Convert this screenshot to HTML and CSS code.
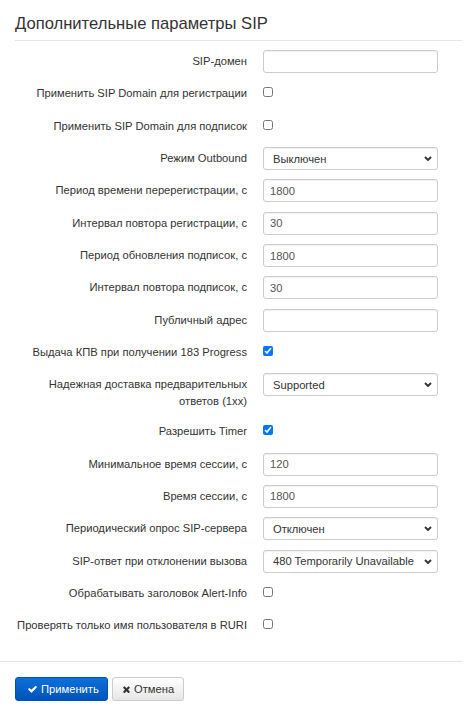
FILE: index.html
```html
<!DOCTYPE html>
<html lang="ru">
<head>
<meta charset="utf-8">
<title>Дополнительные параметры SIP</title>
<link rel="stylesheet" href="styles.css">
</head>
<body>
<div class="panel">
  <div class="header"><h2 class="title">Дополнительные параметры SIP</h2></div>
  <form class="form">
    <div class="row"><label class="lbl">SIP-домен</label><div class="ctl"><input class="inp" type="text" value=""></div></div>
    <div class="row"><label class="lbl">Применить SIP Domain для регистрации</label><div class="ctl chk"><input type="checkbox" class="cb"></div></div>
    <div class="row"><label class="lbl">Применить SIP Domain для подписок</label><div class="ctl chk"><input type="checkbox" class="cb"></div></div>
    <div class="row"><label class="lbl">Режим Outbound</label><div class="ctl sel"><select class="inp select"><option>Выключен</option></select><svg class="chev" viewBox="0 0 8 5" width="8" height="5"><path d="M1 1l3 3 3-3" fill="none" stroke="#333" stroke-width="1.9"/></svg></div></div>
    <div class="row"><label class="lbl">Период времени перерегистрации, с</label><div class="ctl"><input class="inp" type="text" value="1800"></div></div>
    <div class="row"><label class="lbl">Интервал повтора регистрации, с</label><div class="ctl"><input class="inp" type="text" value="30"></div></div>
    <div class="row"><label class="lbl">Период обновления подписок, с</label><div class="ctl"><input class="inp" type="text" value="1800"></div></div>
    <div class="row"><label class="lbl">Интервал повтора подписок, с</label><div class="ctl"><input class="inp" type="text" value="30"></div></div>
    <div class="row"><label class="lbl">Публичный адрес</label><div class="ctl"><input class="inp" type="text" value=""></div></div>
    <div class="row"><label class="lbl">Выдача КПВ при получении 183 Progress</label><div class="ctl chk"><input type="checkbox" class="cb" checked></div></div>
    <div class="row"><label class="lbl lbl-2">Надежная доставка предварительных ответов (1xx)</label><div class="ctl sel"><select class="inp select"><option>Supported</option></select><svg class="chev" viewBox="0 0 8 5" width="8" height="5"><path d="M1 1l3 3 3-3" fill="none" stroke="#333" stroke-width="1.9"/></svg></div></div>
    <div class="row"><label class="lbl">Разрешить Timer</label><div class="ctl chk"><input type="checkbox" class="cb" checked></div></div>
    <div class="row"><label class="lbl">Минимальное время сессии, с</label><div class="ctl"><input class="inp" type="text" value="120"></div></div>
    <div class="row"><label class="lbl">Время сессии, с</label><div class="ctl"><input class="inp" type="text" value="1800"></div></div>
    <div class="row"><label class="lbl">Периодический опрос SIP-сервера</label><div class="ctl sel"><select class="inp select"><option>Отключен</option></select><svg class="chev" viewBox="0 0 8 5" width="8" height="5"><path d="M1 1l3 3 3-3" fill="none" stroke="#333" stroke-width="1.9"/></svg></div></div>
    <div class="row"><label class="lbl">SIP-ответ при отклонении вызова</label><div class="ctl sel"><select class="inp select"><option>480 Temporarily Unavailable</option></select><svg class="chev" viewBox="0 0 8 5" width="8" height="5"><path d="M1 1l3 3 3-3" fill="none" stroke="#333" stroke-width="1.9"/></svg></div></div>
    <div class="row"><label class="lbl">Обрабатывать заголовок Alert-Info</label><div class="ctl chk"><input type="checkbox" class="cb"></div></div>
    <div class="row"><label class="lbl">Проверять только имя пользователя в RURI</label><div class="ctl chk"><input type="checkbox" class="cb"></div></div>
  </form>
  <div class="footer">
    <button class="btn btn-primary" type="button"><svg class="ico" viewBox="110 420 1572 1085" width="9" height="7"><path fill="#fff" d="M1671 566q0 40-28 68l-724 724-136 136q-28 28-68 28t-68-28l-136-136-362-362q-28-28-28-68t28-68l136-136q28-28 68-28t68 28l294 295 656-657q28-28 68-28t68 28l136 136q28 28 28 68z"/></svg>Применить</button>
    <button class="btn btn-default" type="button"><svg class="ico" viewBox="100 300 1210 1240" width="7" height="7"><path fill="#333" d="M1298 1322q0 40-28 68l-136 136q-28 28-68 28t-68-28l-294-294-294 294q-28 28-68 28t-68-28l-136-136q-28-28-28-68t28-68l294-294-294-294q-28-28-28-68t28-68l136-136q28-28 68-28t68 28l294 294 294-294q28-28 68-28t68 28l136 136q28 28 28 68t-28 68l-294 294 294 294q28 28 28 68z"/></svg>Отмена</button>
  </div>
</div>
</body>
</html>
```
FILE: styles.css
```css
html, body {
  margin: 0;
  padding: 0;
  background: #fff;
}
body {
  font-family: "Liberation Sans", Arial, sans-serif;
  color: #333;
  font-size: 11px;
}
.panel {
  width: 462px;
}
.header {
  margin-left: 15px;
  border-bottom: 1px solid #e5e5e5;
  height: 41px;
  box-sizing: border-box;
}
.title {
  margin: 0;
  padding-top: 14px;
  font-size: 16.6px;
  line-height: 20px;
  font-weight: normal;
  color: #333;
}
.form {
  display: flex;
  flex-direction: column;
  gap: 9.35px;
  padding: 9px 0 24px 0;
  margin: 0;
}
.row {
  display: grid;
  grid-template-columns: 232px 175px;
  column-gap: 16px;
  padding-left: 15px;
  align-items: start;
  min-height: 23px;
}
.lbl {
  text-align: right;
  padding-top: 3px;
  line-height: 17px;
  font-size: 11.2px;
  color: #333;
}
.lbl-2 {
  padding-bottom: 0.5px;
}
.ctl {
  height: 23px;
}
.chk {
  display: flex;
  align-items: center;
}
.cb {
  width: 10px;
  height: 10px;
  margin: -3px 0 0 0;
}
.inp {
  box-sizing: border-box;
  width: 175px;
  height: 23px;
  margin: 0;
  border: 1px solid #ccc;
  border-radius: 3px;
  padding: 0 6px;
  font-family: "Liberation Sans", Arial, sans-serif;
  font-size: 11.2px;
  color: #555;
  background: #fff;
  box-shadow: inset 0 1px 1px rgba(0,0,0,0.05);
  outline: none;
}
.sel {
  position: relative;
}
.select {
  appearance: none;
  -webkit-appearance: none;
  padding-left: 9px;
  padding-right: 18px;
  color: #333;
}
.chev {
  position: absolute;
  right: 6px;
  top: 9px;
  pointer-events: none;
}
.footer {
  border-top: 1px solid #e5e5e5;
  padding: 15px 0 0 15px;
  display: flex;
  gap: 4px;
}
.btn {
  display: inline-flex;
  align-items: center;
  box-sizing: border-box;
  height: 24px;
  border-radius: 3px;
  font-family: "Liberation Sans", Arial, sans-serif;
  font-size: 11.2px;
  margin: 0;
  cursor: pointer;
}
.btn-primary {
  width: 93px;
  padding: 0 0 0 12px;
  color: #fff;
  border: 1px solid #0052b3;
  background: linear-gradient(to bottom, #0d70da 0%, #0052bb 100%);
}
.btn-primary .ico {
  margin-right: 4px;
}
.btn-default {
  width: 72px;
  padding: 0 0 0 10px;
  color: #333;
  border: 1px solid #ccc;
  background: linear-gradient(to bottom, #ffffff 0%, #e6e6e6 100%);
  box-shadow: 0 1px 1px rgba(0,0,0,0.06);
}
.btn-default .ico {
  margin-right: 4px;
}
```
